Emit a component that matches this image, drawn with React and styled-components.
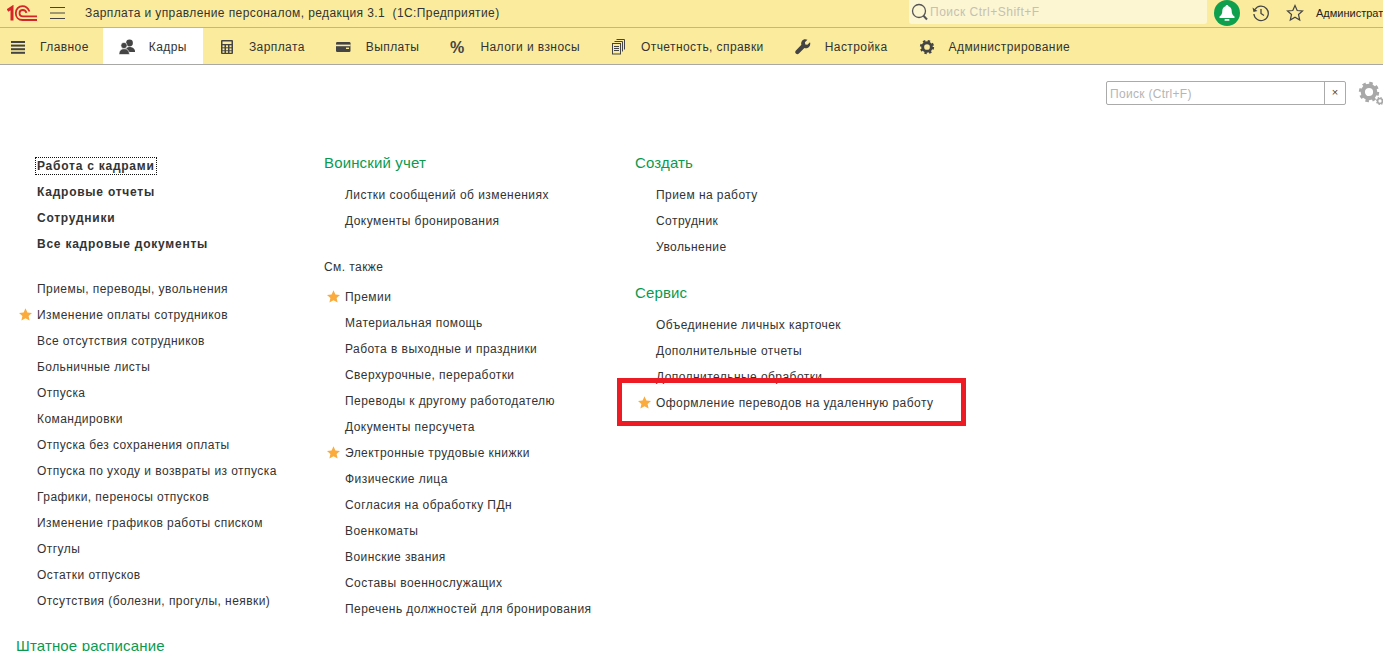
import React from "react";
import styled, { createGlobalStyle } from "styled-components";

const Global = createGlobalStyle`
  html, body { margin: 0; padding: 0; background: #fff; }
  body { font-family: "Liberation Sans", Arial, sans-serif; font-size: 12px; color: #333; }
`;
const Page = styled.div`
  position: relative; width: 1383px; height: 651px; overflow: hidden; background: #fff;
`;
const TopBar = styled.header`
  display: flex; align-items: flex-start; height: 27px; background: #fbec9d;
  border-bottom: 1px solid #c9ba6b; white-space: nowrap; overflow: hidden;
`;
const Logo = styled.svg` margin: 5px 0 0 7px; width: 30px; height: 16px; flex: none; `;
const Burger = styled.svg` margin: 6px 0 0 13px; width: 15px; height: 14px; flex: none; `;
const AppTitle = styled.div`
  margin: 0 0 0 20px; width: 824px; flex: none; line-height: 27px; letter-spacing: 0.4px; color: #333;
`;
const GlobalSearch = styled.div`
  display: flex; align-items: center; width: 298px; height: 24px; background: #fdf6d3;
  border-radius: 0 0 3px 3px; flex: none; color: #c4c1b2; letter-spacing: 0.5px;
`;
const SearchGlass = styled.svg` flex: none; margin-left: 1px; `;
const Bell = styled.div`
  display: flex; align-items: center; justify-content: center; flex: none;
  margin: 0 0 0 7px; width: 26px; height: 26px; border-radius: 50%; background: #0fa04e;
`;
const TopIcon = styled.svg` margin: 4px 0 0 ${p => p.$ml}px; width: 18px; height: 18px; flex: none; `;
const UserName = styled.div` margin-left: 12px; flex: none; line-height: 27px; font-size: 11px; color: #222; `;

const SectionBar = styled.nav`
  display: flex; height: 36px; background: #fbec9d; border-bottom: 1px solid #a8a8a4; white-space: nowrap;
`;
const Tab = styled.div`
  display: flex; align-items: center; gap: 14px;
  padding: 1px ${p => (p.$active ? 16 : 15)}px 0 16px;
  background: ${p => (p.$active ? "#fff" : "transparent")};
  letter-spacing: 0.42px; color: #333;
  &:first-child { padding-left: 10px; padding-right: 14px; }
`;
const TabIcon = styled.svg` width: 16px; height: 16px; flex: none; color: #444; `;

const SearchRow = styled.div`
  display: flex; align-items: flex-start; justify-content: flex-end; padding: 16px 0 0; height: 55px;
`;
const SearchField = styled.div`
  display: flex; width: 240px; height: 24px; box-sizing: border-box; flex: none;
  border: 1px solid #aaa; border-radius: 2px; color: #b5b5b5; letter-spacing: 0.3px; line-height: 24px;
`;
const SearchText = styled.div` flex: 1; padding-left: 3px; `;
const SearchClear = styled.div`
  width: 20px; border-left: 1px solid #aaa; text-align: center; color: #444; font-size: 11px; line-height: 21px;
`;
const FormGear = styled.svg` margin: 0 -1px 0 12px; width: 26px; height: 26px; flex: none; `;

const Columns = styled.main`
  display: grid; grid-template-columns: 308px 311px 1fr; padding: 16px 0 0 16px;
`;
const Column = styled.section` display: flex; flex-direction: column; `;
const Row = styled.div`
  display: flex; align-items: center; height: 26px; padding-top: 2px; box-sizing: border-box; white-space: nowrap;
  letter-spacing: 0.44px; color: #333;
`;
const Slot = styled.span`
  display: flex; align-items: center; width: 18px; padding-left: 3px; flex: none; margin-top: -2px;
`;
const Label = styled.span`
  font-weight: ${p => (p.$bold ? 700 : 400)};
  ${p => p.$bold && "letter-spacing: 0.76px;"}
  ${p => p.$focus && "outline: 1px dotted #111; outline-offset: 1px;"}
`;
const Heading = styled.h2`
  margin: ${p => p.$top || 0}px 0 7px; height: 22px; line-height: 22px; font-size: 15px; font-weight: 400;
  color: #0a9a4f; letter-spacing: 0.15px; white-space: nowrap;
`;
const Note = styled.div`
  margin: 23px 0 7px; height: 20px; line-height: 22px; letter-spacing: 0.42px; color: #333;
`;
const Gap = styled.div` height: 19px; flex: none; `;
const Highlight = styled.div`
  position: absolute; left: 617px; top: 378px; width: 349px; height: 48px;
  box-sizing: border-box; border: 5px solid #ed1c24; pointer-events: none;
`;

const StarSvg = styled.svg` width: 13px; height: 13px; display: block; `;
const Star = () => (
  <StarSvg viewBox="0 0 13 13"><path fill="#fbab3c" d="M6.5 0.3 8.4 4.5 13 5 9.6 8 10.6 12.6 6.5 10.3 2.4 12.6 3.4 8 0 5 4.6 4.5Z" /></StarSvg>
);

const Item = ({ text, star, bold, focus }) => (
  <Row>
    <Slot>{star && <Star />}</Slot>
    <Label $bold={bold} $focus={focus}>{text}</Label>
  </Row>
);

const gear = (cx, cy, r, color) => (
  <g>
    <circle cx={cx} cy={cy} r={r * 0.62} fill="none" stroke={color} strokeWidth={r * 0.42} />
    <circle cx={cx} cy={cy} r={r * 0.87} fill="none" stroke={color} strokeWidth={r * 0.3}
      strokeDasharray={`${(2 * Math.PI * r * 0.87) / 16} ${(2 * Math.PI * r * 0.87) / 16}`} />
  </g>
);

const icons = {
  menu: <g fill="currentColor"><rect x="1" y="2" width="14" height="2" /><rect x="1" y="5.6" width="14" height="2" /><rect x="1" y="9.2" width="14" height="2" /><rect x="1" y="12.8" width="14" height="2" /></g>,
  people: <g fill="currentColor"><circle cx="10.500" cy="4" r="3.400" /><path d="M6 13c0-3 2-5 4.500-5s5.500 1.400 5.500 4.300V13Z" /><circle cx="5" cy="6.500" r="3.100" stroke="#fff" strokeWidth=".6" /><path d="M0 15.500c0-4 2.200-5.700 5.200-5.700s5.200 1.700 5.200 5.700Z" stroke="#fff" strokeWidth=".6" /></g>,
  calc: <g><rect x="2" y="1" width="12" height="14" rx="1" fill="currentColor" /><rect x="3.5" y="2.5" width="9" height="2.5" fill="#fbec9d" /><g fill="#fbec9d"><rect x="3.5" y="6.3" width="2" height="2" /><rect x="7" y="6.3" width="2" height="2" /><rect x="10.5" y="6.3" width="2" height="2" /><rect x="3.5" y="9.3" width="2" height="2" /><rect x="7" y="9.3" width="2" height="2" /><rect x="10.5" y="9.3" width="2" height="2" /><rect x="3.5" y="12.2" width="2" height="1.6" /><rect x="7" y="12.2" width="2" height="1.6" /><rect x="10.5" y="12.2" width="2" height="1.6" /></g></g>,
  card: <g><rect x="0" y="3" width="14.5" height="10" rx="1.2" fill="currentColor" /><rect x="0" y="5.6" width="14.5" height="1.6" fill="#fbec9d" /><rect x="10" y="8.6" width="3" height="1.4" fill="#fbec9d" /></g>,
  report: <g fill="none" stroke="currentColor" strokeWidth="1"><rect x="1.5" y="4.5" width="8" height="10.5" /><path d="M3 7.5h5M3 9.5h5M3 11.5h5M3.5 2.5h8v10M5.5.5h8v10" /></g>,
  wrench: <path fill="currentColor" d="M15 3.2 12.4 5.8 10.3 5.4 9.9 3.3 12.5.8C10.4-.2 8 .3 6.9 2 6 3.4 6 4.7 6.4 5.8L.9 11.6c-.9 1-.9 2.200 0 3 .9.9 2.100.8 3-.1L9.400 9c1.600.5 3.300.2 4.600-1.100 1.200-1.300 1.600-3 1-4.700Z" />,
  gear: gear(8, 8, 7, "currentColor"),
};

const tabs = [
  ["Главное", "menu"], ["Кадры", "people"], ["Зарплата", "calc"], ["Выплаты", "card"],
  ["Налоги и взносы", "percent"], ["Отчетность, справки", "report"], ["Настройка", "wrench"], ["Администрирование", "gear"],
];

const col1a = ["Работа с кадрами", "Кадровые отчеты", "Сотрудники", "Все кадровые документы"];
const col1b = ["Приемы, переводы, увольнения", "*Изменение оплаты сотрудников", "Все отсутствия сотрудников", "Больничные листы", "Отпуска", "Командировки", "Отпуска без сохранения оплаты", "Отпуска по уходу и возвраты из отпуска", "Графики, переносы отпусков", "Изменение графиков работы списком", "Отгулы", "Остатки отпусков", "Отсутствия (болезни, прогулы, неявки)"];
const col2a = ["Листки сообщений об изменениях", "Документы бронирования"];
const col2b = ["*Премии", "Материальная помощь", "Работа в выходные и праздники", "Сверхурочные, переработки", "Переводы к другому работодателю", "Документы персучета", "*Электронные трудовые книжки", "Физические лица", "Согласия на обработку ПДн", "Военкоматы", "Воинские звания", "Составы военнослужащих", "Перечень должностей для бронирования"];
const col3a = ["Прием на работу", "Сотрудник", "Увольнение"];
const col3b = ["Объединение личных карточек", "Дополнительные отчеты", "Дополнительные обработки", "*Оформление переводов на удаленную работу"];

const list = arr => arr.map(t => <Item key={t} text={t.replace("*", "")} star={t[0] === "*"} />);

export default function App() {
  return (
    <Page>
      <Global />
      <TopBar>
        <Logo viewBox="0 0 30 16">
          <g fill="none" stroke="#d5252b" strokeWidth="1.800">
            <path d="M.5 5.500 5 2.500V15.500" strokeWidth="3" />
            <path d="M22.500 6.500C21 3 18.500 1.200 15.500 1.200 11.500 1.200 8.800 4.300 8.800 8.200s2.700 6.800 6.700 6.800H30" />
            <path d="M19.500 7.800C18.800 6 17.500 5 15.900 5c-2 0-3.400 1.400-3.400 3.200s1.400 3.200 3.400 3.200H30" />
          </g>
        </Logo>
        <Burger viewBox="0 0 15 14"><g stroke="#444" strokeWidth="1"><path d="M0 1.500h15M0 7h15M0 12.500h15" /></g></Burger>
        <AppTitle>Зарплата и управление персоналом, редакция 3.1&nbsp;&nbsp;(1С:Предприятие)</AppTitle>
        <GlobalSearch>
          <SearchGlass width="20" height="20" viewBox="0 0 20 20"><circle cx="9" cy="9" r="6.500" fill="none" stroke="#555" strokeWidth="1.300" /><path d="M13.500 13.800 17 17.500" stroke="#555" strokeWidth="2" /></SearchGlass>
          <span>Поиск Ctrl+Shift+F</span>
        </GlobalSearch>
        <Bell>
          <svg width="18" height="18" viewBox="0 0 18 18"><path fill="#fff" d="M9 1c.8 0 1.300.5 1.400 1.200 2.300.6 3.300 2.500 3.300 4.800 0 2.800.9 4.300 2.800 5.500V14H1.500v-1.500C3.400 11.300 4.300 9.800 4.300 7c0-2.300 1-4.200 3.300-4.800C7.700 1.500 8.200 1 9 1Z" /><rect x="6.500" y="15" width="5" height="1.800" rx=".9" fill="#fff" /></svg>
        </Bell>
        <TopIcon $ml={12} viewBox="0 0 18 18"><g fill="none" stroke="#444" strokeWidth="1.300"><path d="M3 5.500A7.200 7.200 0 1 1 1.900 10" /><path d="M9 5v4.500l3 2" /></g><path fill="#444" d="M.5 3.500 5.500 7 1.500 8Z" /></TopIcon>
        <TopIcon $ml={16} viewBox="0 0 18 18"><path fill="none" stroke="#444" strokeWidth="1.200" d="M9 1.500 11.200 6.500 16.500 7 12.500 10.500 13.700 16 9 13.200 4.300 16 5.500 10.500 1.500 7 6.800 6.500Z" /></TopIcon>
        <UserName>Администратор</UserName>
      </TopBar>
      <SectionBar>
        {tabs.map(([t, ic], i) => (
          <Tab key={t} $active={i === 1}>
            <TabIcon viewBox="0 0 16 16">
              {ic === "percent"
                ? <text x="0" y="14" fontSize="16" fontWeight="700" fontFamily="Liberation Sans" fill="currentColor">%</text>
                : icons[ic]}
            </TabIcon>
            <span>{t}</span>
          </Tab>
        ))}
      </SectionBar>
      <SearchRow>
        <SearchField>
          <SearchText>Поиск (Ctrl+F)</SearchText>
          <SearchClear>×</SearchClear>
        </SearchField>
        <FormGear viewBox="0 0 26 26">{gear(11, 11, 10, "#a8a8a8")}{gear(22, 20, 4, "#a8a8a8")}</FormGear>
      </SearchRow>
      <Columns>
        <Column>
          {col1a.map((t, i) => <Item key={t} text={t} bold focus={i === 0} />)}
          <Gap />
          {list(col1b)}
          <Heading $top={22}>Штатное расписание</Heading>
        </Column>
        <Column>
          <Heading>Воинский учет</Heading>
          {list(col2a)}
          <Note>См. также</Note>
          {list(col2b)}
        </Column>
        <Column>
          <Heading>Создать</Heading>
          {list(col3a)}
          <Heading $top={23}>Сервис</Heading>
          {list(col3b)}
        </Column>
      </Columns>
      <Highlight />
    </Page>
  );
}
